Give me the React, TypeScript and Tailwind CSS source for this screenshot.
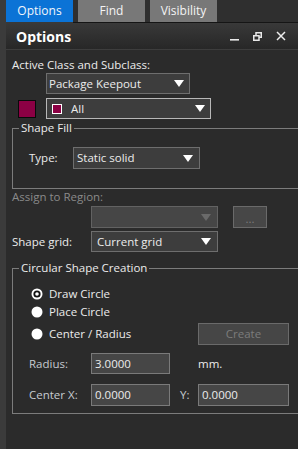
import React from "react";

const Arrow = ({ dim = false }: { dim?: boolean }) => (
  <svg width="10" height="7" viewBox="0 0 10 7" className="shrink-0">
    <polygon points="0,0 10,0 5,7" fill={dim ? "#6a6a6a" : "#ffffff"} />
  </svg>
);

const Radio = ({ checked = false }: { checked?: boolean }) => (
  <svg width="12" height="12" viewBox="0 0 12 12" className="shrink-0">
    <circle cx="6" cy="6" r="5.5" fill="#ffffff" />
    {checked && <circle cx="6" cy="6" r="3.6" fill="#111111" />}
    {checked && <circle cx="6" cy="6" r="1.8" fill="#ffffff" />}
  </svg>
);

export default function App() {
  return (
    <div
      className="w-[298px] h-[449px] flex bg-[#2b2b2b] overflow-hidden text-[11.5px] text-[#ececec]"
      style={{ fontFamily: '"Open Sans", "Noto Sans", sans-serif' }}
    >
      <div className="w-[6px] shrink-0 bg-[#3b3b3b]" />
      <div className="flex-1 flex flex-col min-w-0">
        {/* tabs */}
        <div className="h-[22px] flex bg-[#2f2f2f]">
          <div className="w-[67px] bg-[#0b73d6] flex items-center justify-center text-[12px] text-[#f2f6fb]">Options</div>
          <div className="w-[67px] ml-[5px] bg-[#787878] flex items-center justify-center text-[12px] text-[#f4f4f4]">Find</div>
          <div className="w-[67px] ml-[5px] bg-[#787878] flex items-center justify-center text-[12px] text-[#f4f4f4]">Visibility</div>
        </div>
        <div className="h-[1px] flex">
          <div className="w-[67px] bg-[#393939]" />
          <div className="flex-1 bg-[#151515]" />
        </div>
        {/* header */}
        <div className="h-[26px] flex items-center bg-gradient-to-b from-[#393939] to-[#272727] pl-[10px] pr-[12px]">
          <div className="text-[14px] font-bold text-white flex-1">Options</div>
          <div className="flex items-center gap-[14px]">
            <svg width="9" height="10" viewBox="0 0 9 10">
              <rect x="0" y="8" width="9" height="1.6" fill="#e8e8e8" />
            </svg>
            <svg width="9" height="9" viewBox="0 0 9 9">
              <rect x="3" y="0.75" width="5.25" height="4.5" fill="none" stroke="#e8e8e8" strokeWidth="1.5" />
              <rect x="0.75" y="3.75" width="5.25" height="4.5" fill="#2e2e2e" stroke="#e8e8e8" strokeWidth="1.5" />
            </svg>
            <svg width="10" height="10" viewBox="0 0 10 10">
              <path d="M1 1 L9 9 M9 1 L1 9" stroke="#ededed" strokeWidth="1.5" />
            </svg>
          </div>
        </div>
        <div className="h-[1px] bg-[#3d3d3d]" />
        {/* body */}
        <div className="flex-1 pl-[6px] pt-[8px] flex flex-col">
          <div className="leading-[14px] h-[14px]">Active Class and Subclass:</div>
          <div className="mt-[1px] ml-[34px] w-[144px] h-[21px] bg-[#3d3d3d] border border-[#6e6e6e] flex items-center pl-[2px] pr-[5px]">
            <span className="flex-1">Package Keepout</span>
            <Arrow />
          </div>
          <div className="mt-[4px] h-[21px] flex items-center">
            <div className="ml-[6px] w-[18px] h-[18px] bg-[#8c0044] border border-[#0a0a0a]" />
            <div className="ml-[10px] w-[165px] h-[21px] bg-[#3d3d3d] border border-[#b8b8b8] flex items-center pl-[5px] pr-[5px]">
              <div className="w-[10px] h-[10px] bg-[#8c0044] border border-white" />
              <span className="ml-[9px] flex-1">All</span>
              <Arrow />
            </div>
          </div>
          <fieldset className="mt-[2px] w-[300px] border border-[#7c7c7c] h-[68px] pl-[16px]">
            <legend className="-ml-[10px] px-[2px] leading-[14px]">Shape Fill</legend>
            <div className="mt-[12px] h-[22px] flex items-center">
              <span className="w-[44px]">Type:</span>
              <div className="w-[127px] h-[22px] bg-[#3d3d3d] border border-[#6e6e6e] flex items-center pl-[3px] pr-[6px]">
                <span className="flex-1">Static solid</span>
                <Arrow />
              </div>
            </div>
          </fieldset>
          <div className="mt-[1px] leading-[14px] h-[14px] text-[#8a8a8a]">Assign to Region:</div>
          <div className="mt-[2px] h-[22px] flex">
            <div className="ml-[79px] w-[127px] h-[22px] bg-[#464646] border border-[#626262] flex items-center justify-end pr-[6px]">
              <Arrow dim />
            </div>
            <div className="ml-[15px] w-[34px] h-[22px] bg-[#474747] border border-[#6a6a6a] flex items-center justify-center text-[#7c7c7c] leading-none pt-[4px]">...</div>
          </div>
          <div className="mt-[3px] h-[21px] flex items-center">
            <span className="w-[79px]">Shape grid:</span>
            <div className="w-[127px] h-[21px] bg-[#3d3d3d] border border-[#6e6e6e] flex items-center pl-[5px] pr-[6px]">
              <span className="flex-1">Current grid</span>
              <Arrow />
            </div>
          </div>
          <fieldset className="mt-[9px] w-[300px] border border-[#7c7c7c] h-[153px] pl-[18px]">
            <legend className="-ml-[12px] px-[2px] leading-[14px]">Circular Shape Creation</legend>
            <div className="mt-[10px] h-[18px] flex items-center">
              <Radio checked />
              <span className="ml-[6px]">Draw Circle</span>
            </div>
            <div className="h-[18px] flex items-center">
              <Radio />
              <span className="ml-[6px]">Place Circle</span>
            </div>
            <div className="mt-[2px] h-[22px] flex items-center">
              <Radio />
              <span className="ml-[6px] w-[149px]">Center / Radius</span>
              <div className="w-[91px] h-[22px] bg-[#464646] border border-[#6a6a6a] flex items-center justify-center text-[#7c7c7c]">Create</div>
            </div>
            <div className="mt-[8px] h-[21px] flex items-center">
              <span className="w-[62px] text-[#c6cad0] -ml-[2px]">Radius:</span>
              <div className="w-[79px] h-[21px] bg-[#464646] border border-[#7a7a7a] flex items-center pl-[3px]">3.0000</div>
              <span className="ml-[28px]">mm.</span>
            </div>
            <div className="mt-[10px] h-[22px] flex items-center">
              <span className="w-[62px] text-[#c6cad0] -ml-[2px]">Center X:</span>
              <div className="w-[79px] h-[22px] bg-[#464646] border border-[#7a7a7a] flex items-center pl-[3px]">0.0000</div>
              <span className="ml-[10px] w-[18px] text-[#c6cad0]">Y:</span>
              <div className="w-[91px] h-[22px] bg-[#464646] border border-[#7a7a7a] flex items-center pl-[3px]">0.0000</div>
            </div>
          </fieldset>
        </div>
      </div>
    </div>
  );
}
